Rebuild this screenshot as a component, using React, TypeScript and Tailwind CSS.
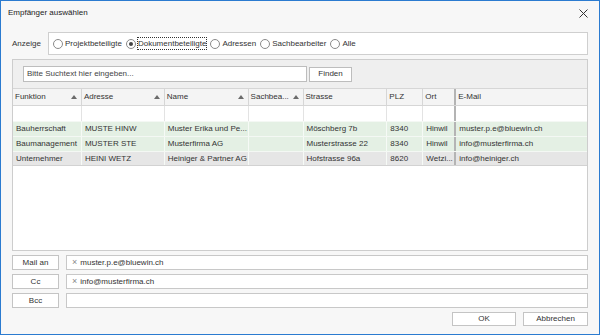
import React from "react";

const cols = [
  { name: "Funktion", w: 69, sort: true },
  { name: "Adresse", w: 83, sort: true },
  { name: "Name", w: 84, sort: true },
  { name: "Sachbea...", w: 55, sort: true },
  { name: "Strasse", w: 84, sort: false },
  { name: "PLZ", w: 36, sort: false },
  { name: "Ort", w: 33, sort: false },
  { name: "E-Mail", w: 131, sort: false },
];

const rows = [
  { bg: "bg-[#e4f0e4]", cells: ["Bauherrschaft", "MUSTE HINW", "Muster Erika und Pe...", "", "Möschberg 7b", "8340", "Hinwil", "muster.p.e@bluewin.ch"] },
  { bg: "bg-[#e4f0e4]", cells: ["Baumanagement", "MUSTER STE", "Musterfirma AG", "", "Musterstrasse 22", "8340", "Hinwil", "info@musterfirma.ch"] },
  { bg: "bg-[#e6e6e6]", cells: ["Unternehmer", "HEINI WETZ", "Heiniger & Partner AG", "", "Hofstrasse 96a", "8620", "Wetzi...", "info@heiniger.ch"] },
];

function Radio({ label, checked, focus }: { label: string; checked?: boolean; focus?: boolean }) {
  return (
    <div className="flex items-center gap-[2px] mr-[4px]">
      <div className="w-[10px] h-[10px] rounded-full border border-[#8a8a8a] bg-white flex items-center justify-center">
        {checked && <div className="w-[4px] h-[4px] rounded-full bg-[#444]" />}
      </div>
      <span className={focus ? "outline outline-1 outline-dotted outline-[#333] leading-[11px]" : "leading-[11px]"}>{label}</span>
    </div>
  );
}

function SortUp() {
  return (
    <svg width="6" height="4" viewBox="0 0 6 4" className="shrink-0">
      <path d="M0 4 L3 0 L6 4 Z" fill="#6b6b6b" />
    </svg>
  );
}

export default function App() {
  return (
    <div
      className="w-[600px] h-[335px] border border-[#2b7bd0] bg-[#f7f7f7] flex flex-col text-[8px] text-[#333]"
      style={{ fontFamily: '"Liberation Sans", Arial, sans-serif' }}
    >
      {/* Title bar */}
      <div className="h-[31px] flex items-start justify-between pl-[7px] pr-[11px] pt-[6px]">
        <span className="text-[8px] text-[#222]">Empfänger auswählen</span>
        <svg width="9" height="9" viewBox="0 0 9 9" className="mt-[2px]">
          <path d="M0.5 0.5 L8.5 8.5 M8.5 0.5 L0.5 8.5" stroke="#333" strokeWidth="1" />
        </svg>
      </div>

      {/* Anzeige */}
      <div className="flex items-center pl-[11px] pr-[11px] h-[23px]">
        <span className="w-[36px]">Anzeige</span>
        <div className="flex-1 h-[23px] bg-white border border-[#cfcfcf] flex items-center pl-[4px]">
          <Radio label="Projektbeteiligte" />
          <Radio label="Dokumentbeteiligte" checked focus />
          <Radio label="Adressen" />
          <Radio label="Sachbearbeiter" />
          <Radio label="Alle" />
        </div>
      </div>

      {/* Grid panel */}
      <div className="mx-[11px] mt-[4px] h-[192px] border border-[#cdcdcd] bg-white flex flex-col">
        <div className="h-[29px] bg-[#efefef] flex items-center pl-[10px] gap-[2px] border-b border-[#d6d6d6]">
          <div className="w-[284px] h-[16px] bg-white border border-[#bdbdbd] flex items-center pl-[3px] text-[#444]">
            Bitte Suchtext hier eingeben...
          </div>
          <div className="w-[43px] h-[15px] bg-white border border-[#bdbdbd] flex items-center justify-center">
            Finden
          </div>
        </div>
        {/* Header */}
        <div className="h-[17px] flex bg-[#f4f4f4] border-b border-[#d6d6d6]">
          {cols.map((c, i) => (
            <div
              key={c.name}
              style={{ width: c.w }}
              className={
                "h-full flex items-center justify-between pl-[2px] pr-[4px] " +
                (i === 6 ? "border-r-2 border-[#b4b4b4]" : i < 7 ? "border-r border-[#d6d6d6]" : "")
              }
            >
              <span>{c.name}</span>
              {c.sort && <SortUp />}
            </div>
          ))}
        </div>
        {/* Filter row */}
        <div className="h-[15px] flex bg-white">
          {cols.map((c, i) => (
            <div
              key={c.name}
              style={{ width: c.w }}
              className={
                "h-full " + (i === 6 ? "border-r-2 border-[#b4b4b4]" : i < 7 ? "border-r border-[#e3e3e3]" : "")
              }
            />
          ))}
        </div>
        {rows.map((r, ri) => (
          <div key={ri} className={"h-[15px] flex border-t border-[#f4f8f4] " + r.bg + (ri === 2 ? " border-b border-b-[#d2d2d2]" : "")}>
            {r.cells.map((t, i) => (
              <div
                key={i}
                style={{ width: cols[i].w }}
                className={
                  "h-full flex items-center pl-[3px] whitespace-nowrap overflow-hidden " +
                  (i === 6 ? "border-r-2 border-[#b4b4b4]" : i < 7 ? "border-r border-[#f6faf6]" : "")
                }
              >
                {t}
              </div>
            ))}
          </div>
        ))}
        <div className="flex-1" />
      </div>

      {/* Recipients */}
      <div className="flex flex-col gap-[4px] mx-[11px] mt-[4px]">
        {[
          { l: "Mail an", v: "muster.p.e@bluewin.ch" },
          { l: "Cc", v: "info@musterfirma.ch" },
          { l: "Bcc", v: "" },
        ].map((x) => (
          <div key={x.l} className="flex gap-[7px] h-[15px]">
            <div className="w-[47px] h-[15px] bg-white border border-[#c4c4c4] flex items-center justify-center">{x.l}</div>
            <div className="flex-1 h-[15px] bg-white border border-[#c8c8c8] flex items-center pl-[5px] gap-[3px]">
              {x.v && (
                <>
                  <span className="text-[#888] text-[9px] leading-[9px]">×</span>
                  <span>{x.v}</span>
                </>
              )}
            </div>
          </div>
        ))}
      </div>

      {/* Buttons */}
      <div className="flex justify-end gap-[7px] mx-[11px] mt-[4px]">
        <div className="w-[64px] h-[14px] bg-white border border-[#c4c4c4] flex items-center justify-center">OK</div>
        <div className="w-[65px] h-[14px] bg-white border border-[#c4c4c4] flex items-center justify-center">Abbrechen</div>
      </div>
    </div>
  );
}
